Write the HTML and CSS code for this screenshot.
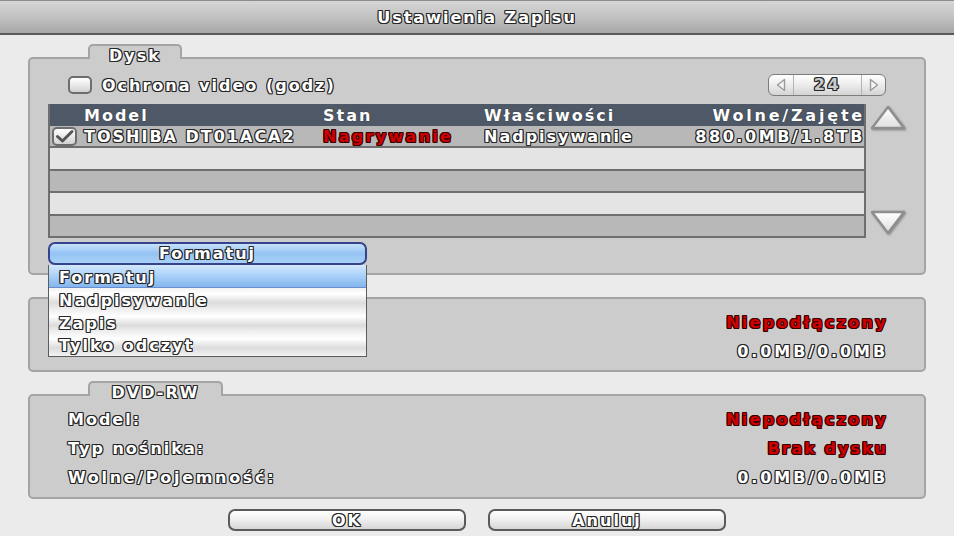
FILE: index.html
```html
<!DOCTYPE html>
<html lang="pl">
<head>
<meta charset="utf-8">
<title>Ustawienia Zapisu</title>
<link rel="stylesheet" href="styles.css">
</head>
<body>
<div class="titlebar"><span class="ol">Ustawienia Zapisu</span></div>
<div class="main">
  <section class="sec first">
    <div class="tab tab-disk"><span class="ol">Dysk</span></div>
    <div class="panel disk">
      <div class="opt">
        <span class="cb"></span>
        <span class="ol optlabel">Ochrona video (godz)</span>
        <div class="spin">
          <span class="sa">
            <svg width="12" height="14" viewBox="0 0 12 14"><polygon points="9.5,1.5 9.5,12.5 2.5,7" fill="#f6f6f6" stroke="#9a9a9a" stroke-width="1.4" stroke-linejoin="round"/></svg>
          </span>
          <span class="sv ol gray num">24</span>
          <span class="sa sr">
            <svg width="12" height="14" viewBox="0 0 12 14"><polygon points="2.5,1.5 2.5,12.5 9.5,7" fill="#f6f6f6" stroke="#9a9a9a" stroke-width="1.4" stroke-linejoin="round"/></svg>
          </span>
        </div>
      </div>
      <div class="list">
        <div class="table">
          <div class="thead">
            <span></span><span>Model</span><span>Stan</span><span>Właściwości</span><span class="rt hwide">Wolne/Zajęte</span>
          </div>
          <div class="row d">
            <span class="cbcell"><span class="cb sm"><svg width="21" height="15" viewBox="0 0 21 15"><path d="M3.5 7.5 L8.5 12 L18 2.5" fill="none" stroke="#555" stroke-width="3" stroke-linecap="round" stroke-linejoin="round"/></svg></span></span>
            <span class="ol">TOSHIBA DT01ACA2</span><span class="red">Nagrywanie</span><span class="ol">Nadpisywanie</span><span class="ol rt num">880.0MB/1.8TB</span>
          </div>
          <div class="row l"></div>
          <div class="row d"></div>
          <div class="row l"></div>
          <div class="row d"></div>
        </div>
        <div class="arrows">
          <svg class="arr" width="36" height="28" viewBox="0 0 36 28">
            <defs><linearGradient id="gu" x1="0" y1="0" x2="0" y2="1"><stop offset="0" stop-color="#ffffff"/><stop offset="1" stop-color="#dedede"/></linearGradient></defs>
            <polygon points="18,3 34,24 2,24" fill="url(#gu)" stroke="#8e8e8e" stroke-width="2.4" stroke-linejoin="round"/>
          </svg>
          <svg class="arr" width="36" height="28" viewBox="0 0 36 28">
            <defs><linearGradient id="gd" x1="0" y1="0" x2="0" y2="1"><stop offset="0" stop-color="#ffffff"/><stop offset="1" stop-color="#dedede"/></linearGradient></defs>
            <polygon points="2,3 34,3 18,24" fill="url(#gd)" stroke="#8e8e8e" stroke-width="2.4" stroke-linejoin="round"/>
          </svg>
        </div>
      </div>
      <div class="fmtwrap">
        <div class="fmt"><span class="ol">Formatuj</span></div>
        <div class="menu">
          <div class="mi sel"><span class="ol">Formatuj</span></div>
          <div class="mi"><span class="ol">Nadpisywanie</span></div>
          <div class="mi"><span class="ol">Zapis</span></div>
          <div class="mi"><span class="ol">Tylko odczyt</span></div>
        </div>
      </div>
    </div>
  </section>

  <section class="sec">
    <div class="tab tab-ext"></div>
    <div class="panel info two">
      <div class="kv"><span></span><span class="red val">Niepodłączony</span></div>
      <div class="kv"><span></span><span class="ol val num2">0.0MB/0.0MB</span></div>
    </div>
  </section>

  <section class="sec">
    <div class="tab tab-dvd"><span class="ol">DVD-RW</span></div>
    <div class="panel info three">
      <div class="kv"><span class="ol">Model:</span><span class="red val">Niepodłączony</span></div>
      <div class="kv"><span class="ol">Typ nośnika:</span><span class="red val tight">Brak dysku</span></div>
      <div class="kv"><span class="ol wide">Wolne/Pojemność:</span><span class="ol val num2">0.0MB/0.0MB</span></div>
    </div>
  </section>

  <div class="btns">
    <div class="btn"><span class="ol">OK</span></div>
    <div class="btn"><span class="ol">Anuluj</span></div>
  </div>
</div>
</body>
</html>
```

FILE: styles.css
```css
* { box-sizing: border-box; margin: 0; padding: 0; }
html, body { width: 954px; height: 536px; overflow: hidden; }
body {
  background: #ebebeb;
  font-family: "DejaVu Sans", Verdana, sans-serif;
  font-weight: bold;
  font-size: 16px;
  letter-spacing: 2px;
  color: #fff;
  white-space: nowrap;
}

.ol {
  color: #fff;
  text-shadow: -1px -1px 0 #262626, 1px -1px 0 #262626, -1px 1px 0 #262626, 1px 1px 0 #262626,
               0 -1px 0 #262626, 0 1px 0 #262626, -1px 0 0 #262626, 1px 0 0 #262626;
}
.ol.gray { color: #c9c9c9; }
.ol.wide { letter-spacing: 2.7px; }
.num { letter-spacing: 2.6px; }
.num2 { letter-spacing: 2.9px; }
.hwide { letter-spacing: 2.8px; }
.red {
  color: #d10000;
  letter-spacing: 2.3px;
  text-shadow: -1px -1px 0 #3a0000, 1px -1px 0 #3a0000, -1px 1px 0 #3a0000, 1px 1px 0 #3a0000,
               0 -1px 0 #3a0000, 0 1px 0 #3a0000, -1px 0 0 #3a0000, 1px 0 0 #3a0000;
}
.red.tight { letter-spacing: 2px; }

.titlebar {
  height: 35px;
  border-top: 1px solid #8c8c8c;
  border-bottom: 2px solid #5a5a5a;
  background: linear-gradient(#d6d6d6, #c0c0c0 55%, #a6a6a6);
  display: flex;
  align-items: center;
  justify-content: center;
  font-size: 16px;
  letter-spacing: 2px;
}

.main { padding: 0 28px; }
.sec { margin-top: 9px; }

.tab {
  position: relative;
  z-index: 1;
  margin-left: 60px;
  height: 15px;
  margin-bottom: -2px;
  background: #cccccc;
  border: 2px solid #a4a4a4;
  border-bottom: none;
  border-radius: 5px 5px 0 0;
  text-align: center;
  padding-top: 1px;
  line-height: 18px;
}
.tab-disk { width: 94px; }
.tab-ext { width: 110px; }
.tab-dvd { width: 135px; }

.panel {
  background: #cccccc;
  border: 2px solid #a4a4a4;
  border-radius: 5px;
}

.disk { padding: 15px 18px 8px 18px; }

.opt { display: flex; align-items: center; height: 22px; padding-right: 20px; }
.cb {
  display: inline-flex;
  align-items: center;
  justify-content: center;
  flex-shrink: 0;
  width: 24px;
  height: 18px;
  margin-left: 20px;
  border: 2px solid #6d6d6d;
  border-radius: 5px;
  background: linear-gradient(#ffffff, #e9e9e9 50%, #d2d2d2);
}
.optlabel { margin-left: 10px; }

.spin {
  margin-left: auto;
  width: 118px;
  height: 22px;
  display: flex;
  border: 1.5px solid #7c7c7c;
  border-radius: 6px;
  background: linear-gradient(#ffffff, #eeeeee 45%, #d4d4d4);
}
.sa {
  width: 25px;
  display: flex;
  align-items: center;
  justify-content: center;
  border-right: 1px solid #b4b4b4;
}
.sa.sr { border-right: none; border-left: 1px solid #b4b4b4; width: 24px; }
.sv { flex: 1; text-align: center; line-height: 20px; }

.list { display: flex; margin-top: 8px; height: 134px; }
.table {
  flex: 0 0 818px;
  border-left: 2px solid #6e6e6e;
  border-right: 2px solid #6e6e6e;
}
.thead, .row {
  display: grid;
  grid-template-columns: 34px 239px 161px 1fr auto;
  align-items: center;
}
.thead {
  height: 22px;
  background: #4e5866;
  color: #fff;
  text-shadow: 0 0 1px #1e2228;
}
.row { height: 22.4px; border-bottom: 2px solid #6e6e6e; }
.row.d { background: #b8b8b8; }
.row.l { background: #e4e4e4; }
.rt { text-align: right; margin-right: -1px; }
.cbcell { display: flex; align-items: center; height: 100%; }
.cb.sm { width: 25px; height: 19px; margin-left: 2px; }

.arrows {
  margin-left: 4px;
  flex: 0 0 36px;
  display: flex;
  flex-direction: column;
  justify-content: space-between;
  padding-bottom: 1px;
}
.arr { display: block; filter: drop-shadow(1px 1.5px 1px rgba(0,0,0,0.35)); }

.fmtwrap { position: relative; margin-top: 4px; width: 319px; }
.fmt {
  height: 23px;
  border: 2px solid #34438c;
  border-radius: 7px;
  background: linear-gradient(#c8e2fb, #94c3f3 50%, #a9d1f8);
  text-align: center;
  line-height: 20px;
}
.menu {
  position: absolute;
  top: 23px;
  left: 0;
  width: 319px;
  z-index: 5;
  border: 1px solid #5c5c5c;
  border-top: none;
  background: #f0f0f0;
}
.mi {
  height: 22.75px;
  line-height: 22px;
  padding-top: 2px;
  padding-left: 10px;
  background: linear-gradient(#f2f2f2, #ffffff 25%, #dcdcdc 65%, #f3f3f3);
}
.mi.sel {
  background: linear-gradient(#d4e8fc, #a8d0f8 50%, #84b6ee);
  border-bottom: 1px solid #6b8ed0;
}

.info { padding: 8.5px 38px 4.5px 38px; }
.three { padding-bottom: 5.5px; }
.kv { display: flex; justify-content: space-between; align-items: center; height: 29px; }
.val { margin-right: -2px; }

.btns { display: flex; justify-content: center; gap: 22px; margin-top: 10px; }
.btn {
  width: 238px;
  height: 22px;
  border: 2px solid #5a5a5a;
  border-radius: 7px;
  background: linear-gradient(#ffffff, #f0f0f0 45%, #d6d6d6);
  text-align: center;
  line-height: 19px;
}
```
